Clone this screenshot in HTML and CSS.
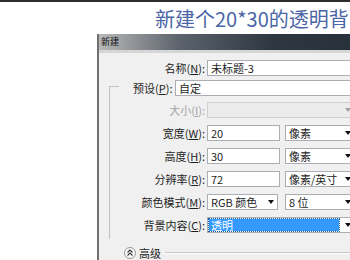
FILE: index.html
```html
<!DOCTYPE html>
<html lang="zh-CN">
  <head>
    <meta charset="UTF-8" />
    <title>新建</title>
    <link rel="stylesheet" href="styles.css">
  </head>

  <body>
    <h1 class="headline">新建个20*30的透明背</h1>

    <div class="dialog">
      <div class="titlebar">新建</div>
      <div class="panel">
        <div class="row">
          <span class="label">名称(<u>N</u>):</span>
          <div class="input name">未标题-3</div>
        </div>

        <fieldset class="group">
          <legend class="preset">
            <div class="preset-row">
              <span class="preset-label">预设(<u>P</u>):</span>
              <div class="input grow">自定</div>
            </div>
          </legend>

          <div class="row first disabled">
            <span class="label">大小(<u>I</u>):</span>
            <div class="select wide"><span class="value"></span><span class="arrow"></span></div>
          </div>
          <div class="row">
            <span class="label">宽度(<u>W</u>):</span>
            <div class="input num">20</div>
            <div class="select unit"><span class="value">像素</span><span class="arrow"></span></div>
          </div>
          <div class="row">
            <span class="label">高度(<u>H</u>):</span>
            <div class="input num">30</div>
            <div class="select unit"><span class="value">像素</span><span class="arrow"></span></div>
          </div>
          <div class="row">
            <span class="label">分辨率(<u>R</u>):</span>
            <div class="input num">72</div>
            <div class="select unit"><span class="value">像素/英寸</span><span class="arrow"></span></div>
          </div>
          <div class="row">
            <span class="label">颜色模式(<u>M</u>):</span>
            <div class="select mode"><span class="value">RGB 颜色</span><span class="arrow"></span></div>
            <div class="select unit"><span class="value">8 位</span><span class="arrow"></span></div>
          </div>
          <div class="row">
            <span class="label">背景内容(<u>C</u>):</span>
            <div class="select wide"><span class="value picked">透明</span><span class="arrow"></span></div>
          </div>
        </fieldset>

        <div class="advanced">
          <svg class="toggle" width="12" height="12" viewBox="0 0 12 12">
            <circle cx="6" cy="6" r="5.5" fill="#fafafa" stroke="#9a9a9a" />
            <path d="M3.5 5.5 L6 3 L8.5 5.5 M3.5 8.5 L6 6 L8.5 8.5" fill="none" stroke="#333" stroke-width="1.1" />
          </svg>
          <span class="advanced-text">高级</span>
          <span class="rule"></span>
        </div>
      </div>
    </div>
  </body>
</html>
```

FILE: styles.css
```css
* {
  padding: 0;
  margin: 0;
  box-sizing: border-box;
}

body {
  width: 350px;
  height: 260px;
  overflow: hidden;
  background: #fff;
  border-top: 2px solid #2e2e2e;
  font-family: "Noto Sans CJK SC", sans-serif;
  color: #1e1e1e;
}

.headline {
  height: 32px;
  padding: 5px 0 0 155px;
  font-size: 20px;
  font-weight: normal;
  line-height: 24px;
  color: #4a66a6;
  white-space: nowrap;
}

.dialog {
  width: 270px;
  height: 226px;
  margin-left: 97px;
  border-left: 2px solid #707070;
  background: #f0f0f0;
}

.titlebar {
  height: 16px;
  padding-left: 2px;
  font-size: 9px;
  line-height: 16px;
  color: #111;
  background: linear-gradient(to right, #b8b8b8, #5c636c 30%, #2e3640 65%, #27303a);
}

.panel {
  border-top: 3px solid #d6d6d6;
  padding-top: 7px;
}

.row {
  display: flex;
  align-items: center;
  height: 16px;
  font-size: 11px;
}

.label {
  width: 108px;
  padding-right: 2px;
  text-align: right;
  line-height: 16px;
  white-space: nowrap;
}

.group {
  margin-left: 10px;
  padding: 0 0 6px 0;
  border: none;
  border-left: 1px solid #c2c2c2;
  border-top: 1px solid #c2c2c2;
}

.group .row {
  margin-top: 7px;
}

.group .row.first {
  margin-top: 6px;
}

.group .label {
  width: 97px;
}

.preset {
  width: calc(100% - 9px);
  margin-left: 9px;
  padding: 4px 0 0 0;
}

.preset-row {
  display: flex;
  align-items: center;
  height: 16px;
  font-size: 11px;
}

.preset-label {
  width: 56px;
  padding-left: 14px;
  white-space: nowrap;
}

.input {
  height: 16px;
  padding-left: 3px;
  border: 1px solid #abadb3;
  background: #fff;
  font-size: 11px;
  line-height: 14px;
  white-space: nowrap;
}

.input.name {
  width: 150px;
}

.input.grow {
  flex: 1;
}

.input.num {
  width: 73px;
  margin-right: 5px;
}

.select {
  display: flex;
  height: 16px;
  border: 1px solid #abadb3;
  background: #fff;
  font-size: 11px;
  line-height: 14px;
  white-space: nowrap;
}

.select .value {
  flex: 1;
  padding-left: 3px;
}

.select .arrow {
  width: 12px;
  display: flex;
  align-items: center;
  justify-content: center;
}

.select .arrow::after {
  content: "";
  border-top: 4px solid #111;
  border-left: 3px solid transparent;
  border-right: 3px solid transparent;
}

.select.wide {
  width: 148px;
}

.select.unit {
  width: 70px;
}

.select.mode {
  width: 71px;
  margin-right: 7px;
}

.select .picked {
  margin: 1px 3px 1px 1px;
  padding-left: 2px;
  background: #3399ff;
  color: #fff;
  line-height: 12px;
  outline: 1px dotted #1c5fa8;
}

.disabled .label {
  color: #a3a3a3;
}

.disabled .select {
  border-color: #d0d0d0;
  background: #ececec;
}

.disabled .select .arrow::after {
  border-top-color: #a0a0a0;
}

.advanced {
  display: flex;
  align-items: center;
  height: 12px;
  margin-top: 8px;
  padding-left: 25px;
  font-size: 11px;
}

.advanced-text {
  margin-left: 3px;
  line-height: 12px;
}

.rule {
  flex: 1;
  margin-left: 4px;
  border-top: 1px solid #c6c6c6;
  border-bottom: 1px solid #fff;
}
```
